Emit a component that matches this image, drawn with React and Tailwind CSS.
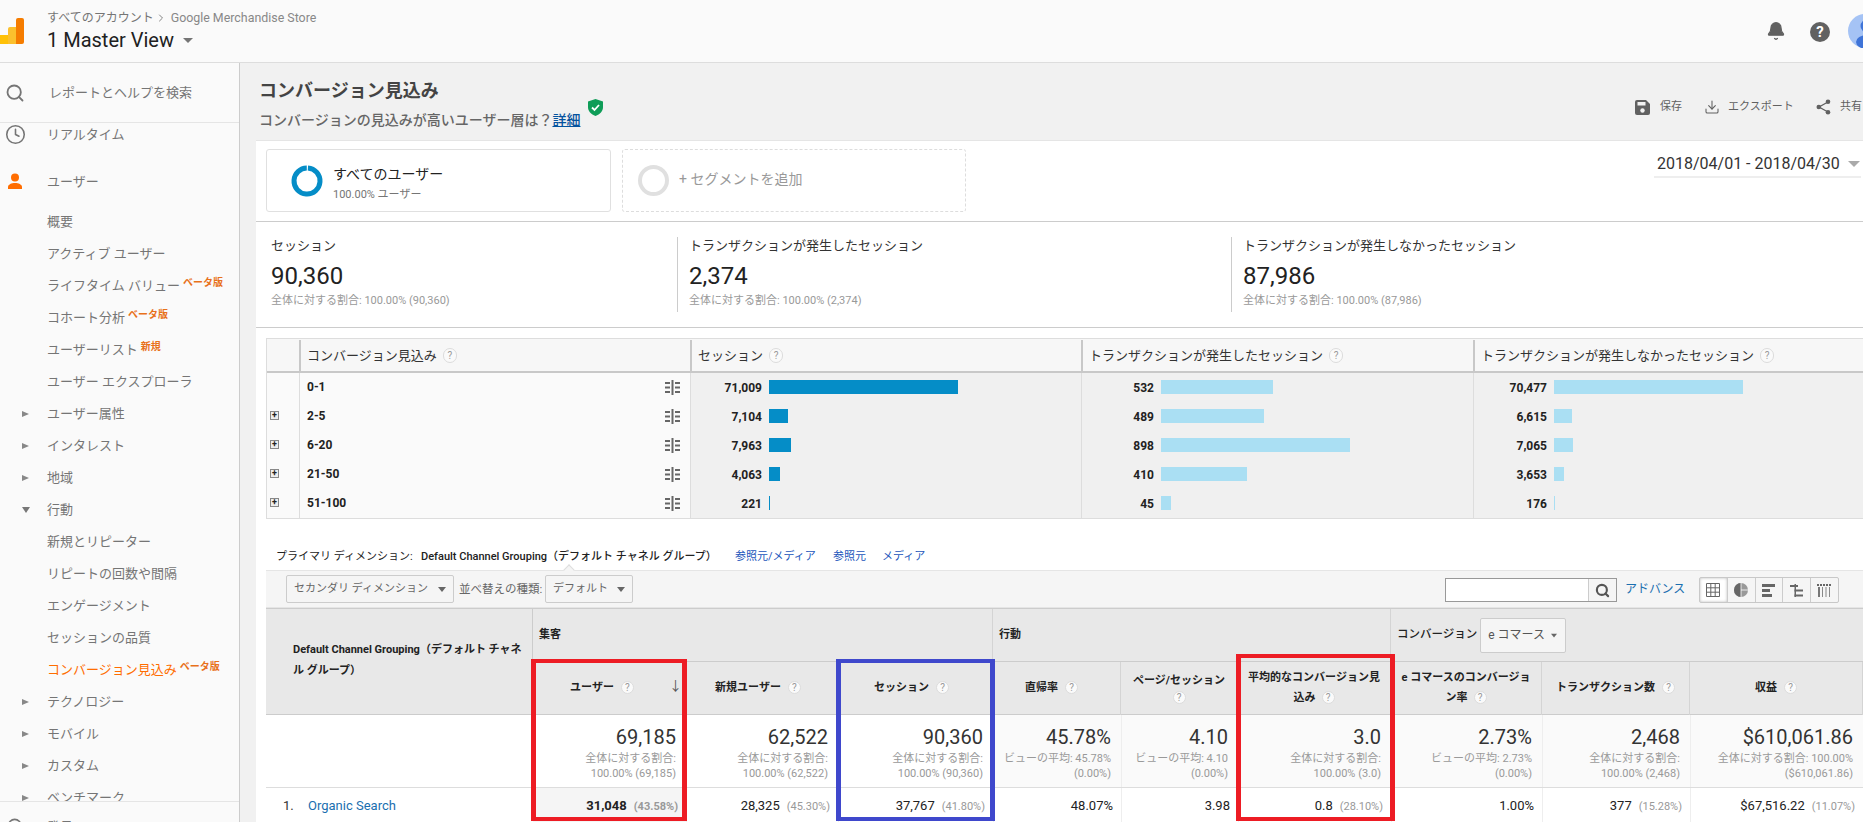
import { Bell, ChevronRight, Clock, Download, Search } from "lucide-react";

const sideItems = [
  { label: "概要", y: 221 },
  { label: "アクティブ ユーザー", y: 253 },
  { label: "ライフタイム バリュー", y: 285, tag: "ベータ版" },
  { label: "コホート分析", y: 317, tag: "ベータ版" },
  { label: "ユーザーリスト", y: 349, tag: "新規" },
  { label: "ユーザー エクスプローラ", y: 381 },
  { label: "ユーザー属性", y: 413, arrow: "right" },
  { label: "インタレスト", y: 445, arrow: "right" },
  { label: "地域", y: 477, arrow: "right" },
  { label: "行動", y: 509, arrow: "down" },
  { label: "新規とリピーター", y: 541 },
  { label: "リピートの回数や間隔", y: 573 },
  { label: "エンゲージメント", y: 605 },
  { label: "セッションの品質", y: 637 },
  { label: "コンバージョン見込み", y: 669, tag: "ベータ版", active: true },
  { label: "テクノロジー", y: 701, arrow: "right" },
  { label: "モバイル", y: 733, arrow: "right" },
  { label: "カスタム", y: 765, arrow: "right" },
  { label: "ベンチマーク", y: 797, arrow: "right" },
];

const probRows = [
  { label: "0-1", a: "71,009", aw: 189, b: "532", bw: 112, c: "70,477", cw: 189 },
  { label: "2-5", a: "7,104", aw: 19, b: "489", bw: 103, c: "6,615", cw: 18, plus: true },
  { label: "6-20", a: "7,963", aw: 22, b: "898", bw: 189, c: "7,065", cw: 19, plus: true },
  { label: "21-50", a: "4,063", aw: 11, b: "410", bw: 86, c: "3,653", cw: 10, plus: true },
  { label: "51-100", a: "221", aw: 1, b: "45", bw: 10, c: "176", cw: 1, plus: true },
];

const columns = [
  { head: ["ユーザー"], headClass: "pr-[14px]", total: "69,185", sub: ["全体に対する割合:", "100.00% (69,185)"], val: "31,048", pct: "(43.58%)", sorted: true },
  { head: ["新規ユーザー"], headClass: "pr-[7px]", total: "62,522", sub: ["全体に対する割合:", "100.00% (62,522)"], val: "28,325", pct: "(45.30%)" },
  { head: ["セッション"], headClass: "pr-[7px]", total: "90,360", sub: ["全体に対する割合:", "100.00% (90,360)"], val: "37,767", pct: "(41.80%)" },
  { head: ["直帰率"], headClass: "pr-[10px]", total: "45.78%", sub: ["ビューの平均: 45.78%", "(0.00%)"], val: "48.07%" },
  { head: ["ページ/セッション", ""], total: "4.10", sub: ["ビューの平均: 4.10", "(0.00%)"], val: "3.98" },
  { head: ["平均的なコンバージョン見", "込み"], total: "3.0", sub: ["全体に対する割合:", "100.00% (3.0)"], val: "0.8", pct: "(28.10%)" },
  { head: ["e コマースのコンバージョ", "ン率"], total: "2.73%", sub: ["ビューの平均: 2.73%", "(0.00%)"], val: "1.00%" },
  { head: ["トランザクション数"], total: "2,468", sub: ["全体に対する割合:", "100.00% (2,468)"], val: "377", pct: "(15.28%)" },
  { head: ["収益"], total: "$610,061.86", sub: ["全体に対する割合: 100.00%", "($610,061.86)"], val: "$67,516.22", pct: "(11.07%)" },
];

function Help({ big }) {
  return (
    <span className={`inline-flex shrink-0 items-center justify-center rounded-full border border-[#dcdcdc] bg-[#fafafa] font-normal leading-none text-[#999] ${big ? "h-[15px] w-[14px] text-[10px]" : "h-[13px] w-[13px] text-[10px]"}`}>
      ?
    </span>
  );
}

function Caret({ className = "" }) {
  return <span className={`inline-block h-0 w-0 border-x-[4px] border-t-[5px] border-x-transparent border-t-[#666] ${className}`} />;
}

function Logo() {
  return (
    <svg width="25" height="26" viewBox="0 0 25 26" className="absolute left-0 top-[18px]">
      <rect x="-6" y="17" width="22" height="9" rx="2" fill="#ffc107" />
      <path d="M8 11a2 2 0 0 1 2-2h6v17H8z" fill="#fbc02d" />
      <path d="M16 2a2 2 0 0 1 2-2h4a2 2 0 0 1 2 2v22a2 2 0 0 1-2 2h-6z" fill="#f57c00" />
    </svg>
  );
}

function SideNav() {
  return (
    <aside className="absolute bottom-0 left-0 top-[63px] w-[240px] overflow-hidden border-r border-[#ccc] bg-[#fafafa] text-[13px] text-[#757575]">
      <div className="absolute left-0 top-0 h-[60px] w-full border-b border-[#e5e5e5]">
        <Search size={20} strokeWidth={2.2} className="absolute left-[5px] top-[20px] text-[#757575]" />
        <span className="absolute left-[49px] top-[20px] leading-5">レポートとヘルプを検索</span>
      </div>
      <Clock size={21} strokeWidth={1.8} className="absolute left-[5px] top-[61px] text-[#757575]" />
      <span className="absolute left-[47px] top-[62px] leading-5">リアルタイム</span>
      <svg width="18" height="18" viewBox="0 0 18 18" className="absolute left-[7px] top-[110px]">
        <circle cx="8" cy="4.500" r="4" fill="#ff6d00" />
        <path d="M1 16v-2c0-2.500 3.500-4 7-4s7 1.500 7 4v2z" fill="#ff6d00" />
      </svg>
      <span className="absolute left-[47px] top-[109px] leading-5">ユーザー</span>
      {sideItems.map((item) => (
        <div key={item.label} className="absolute left-0 flex h-5 items-center" style={{ top: item.y - 72 }}>
          {item.arrow === "right" && (
            <span className="absolute left-[22px] h-0 w-0 border-y-[3.5px] border-l-[7px] border-y-transparent border-l-[#888]" />
          )}
          {item.arrow === "down" && (
            <span className="absolute left-[22px] h-0 w-0 border-x-[4px] border-t-[6px] border-x-transparent border-t-[#777]" />
          )}
          <span className={`ml-[47px] whitespace-nowrap ${item.active ? "text-[#ff6d00]" : ""}`}>{item.label}</span>
          {item.tag && (
            <span className="relative top-[-4px] ml-[3px] whitespace-nowrap text-[10px] font-bold text-[#e8711a]">{item.tag}</span>
          )}
        </div>
      ))}
      <div className="absolute left-0 top-[738px] h-[30px] w-full border-t border-[#e5e5e5] bg-[#fafafa]">
        <Search size={19} className="absolute left-[6px] top-[15px] text-[#757575]" />
        <span className="absolute left-[47px] top-[15px] leading-5">発見</span>
      </div>
    </aside>
  );
}

function SegmentRow() {
  return (
    <div className="relative h-[81px] border-b border-[#ccc]">
      <div className="absolute left-[10px] top-[8px] h-[63px] w-[345px] rounded-[3px] border border-[#e0e0e0]">
        <svg width="32" height="32" viewBox="0 0 32 32" className="absolute left-[24px] top-[15px]">
          <circle cx="16" cy="16" r="13" fill="none" stroke="#058dc7" strokeWidth="5" strokeDasharray="80 1.700" transform="rotate(-86 16 16)" />
        </svg>
        <div className="absolute left-[66px] top-[14px] whitespace-nowrap text-[14px] leading-5 text-[#222]">すべてのユーザー</div>
        <div className="absolute left-[66px] top-[37px] whitespace-nowrap text-[11px] leading-4 text-[#757575]">100.00% ユーザー</div>
      </div>
      <div className="absolute left-[366px] top-[8px] h-[63px] w-[344px] rounded-[3px] border border-dashed border-[#ddd]">
        <span className="absolute left-[15px] top-[15px] h-[31px] w-[31px] rounded-full border-[4px] border-[#e0e0e0]" />
        <span className="absolute left-[56px] top-[19px] whitespace-nowrap text-[14px] leading-5 text-[#999]">+ セグメントを追加</span>
      </div>
      <div className="absolute left-[1398px] top-[11px] flex h-[26px] w-[207px] items-center border-b-2 border-[#eee] pl-[3px] text-[16px] text-[#333]">
        <span className="whitespace-nowrap">2018/04/01 - 2018/04/30</span>
        <span className="ml-[8px] h-0 w-0 border-x-[6px] border-t-[6px] border-x-transparent border-t-[#aaa]" />
      </div>
    </div>
  );
}

function Scorecard({ className, title, value, foot, divider }) {
  return (
    <div className={`absolute top-[15px] h-[75px] ${divider ? "border-l border-[#ccc] pl-[11px]" : ""} ${className}`}>
      <div className="whitespace-nowrap text-[13px] leading-[18px] text-[#333]">{title}</div>
      <div className="mt-[7px] text-[24px] leading-[28px] text-[#222]">{value}</div>
      <div className="mt-[4px] whitespace-nowrap text-[11px] leading-[14px] text-[#999]">{foot}</div>
    </div>
  );
}

function ScoreRow() {
  return (
    <div className="relative h-[106px] border-b border-[#ccc]">
      <Scorecard className="left-[15px]" title="セッション" value="90,360" foot="全体に対する割合: 100.00% (90,360)" />
      <Scorecard className="left-[421px]" divider title="トランザクションが発生したセッション" value="2,374" foot="全体に対する割合: 100.00% (2,374)" />
      <Scorecard className="left-[975px]" divider title="トランザクションが発生しなかったセッション" value="87,986" foot="全体に対する割合: 100.00% (87,986)" />
    </div>
  );
}

function SliceIcon() {
  return (
    <svg width="15" height="15" viewBox="0 0 15 15" className="absolute right-[10px] top-[7px]" fill="#666">
      <rect x="6.500" y="0" width="2" height="15" />
      <rect x="0" y="2" width="5" height="2" />
      <rect x="0" y="6.500" width="5" height="2" />
      <rect x="0" y="11" width="5" height="2" />
      <rect x="10" y="2" width="5" height="2" />
      <rect x="10" y="6.500" width="5" height="2" />
      <rect x="10" y="11" width="5" height="2" />
    </svg>
  );
}

function BarCell({ value, width, valueW, color }) {
  return (
    <div className="relative h-full border-l border-[#ddd] bg-[#f0f0f0]">
      <span className="absolute top-[8px] text-right text-[12px] font-bold leading-[14px] text-[#222]" style={{ width: valueW }}>{value}</span>
      <span className={`absolute top-[7px] h-[14px] ${color}`} style={{ left: valueW + 7, width }} />
    </div>
  );
}

function ProbTable() {
  return (
    <div className="absolute left-[10px] right-0 top-[197px] border-y border-l border-[#ddd]">
      <div className="grid h-[34px] grid-cols-[32px_391px_391px_392px_1fr] border-b-2 border-[#c8c8c8] bg-[#f7f7f7] pt-[1px] text-[13px] text-[#333]">
        <div />
        {["コンバージョン見込み", "セッション", "トランザクションが発生したセッション", "トランザクションが発生しなかったセッション"].map((h, i) => (
          <div key={h} className={`flex items-center gap-[6px] border-l-2 border-[#c8c8c8] ${i === 1 ? "pl-[6px]" : "pl-[6px]"}`}>
            <span className="whitespace-nowrap">{h}</span>
            <Help big />
          </div>
        ))}
      </div>
      {probRows.map((r) => (
        <div key={r.label} className="grid h-[29px] grid-cols-[32px_391px_391px_392px_1fr] border-b border-[#ddd]">
          <div className="relative bg-[#fafafa]">
            {r.plus && (
              <span className="absolute left-[3px] top-[9px] flex h-[9px] w-[9px] items-center justify-center border border-[#888] bg-[#eee] text-[9px] font-bold leading-none text-[#222]">+</span>
            )}
          </div>
          <div className="relative border-l border-[#ddd] bg-[#fafafa] pl-[7px] text-[12px] font-bold leading-[29px] text-[#222]">
            {r.label}
            <SliceIcon />
          </div>
          <BarCell value={r.a} width={r.aw} valueW={71} color="bg-[#058dc7]" />
          <BarCell value={r.b} width={r.bw} valueW={72} color="bg-[#aadff3]" />
          <BarCell value={r.c} width={r.cw} valueW={73} color="bg-[#aadff3]" />
          <div className="bg-[#f0f0f0]" />
        </div>
      ))}
    </div>
  );
}

function PrimaryDim() {
  return (
    <div className="absolute left-[20px] top-[408px] flex items-center whitespace-nowrap text-[11px] leading-4 text-[#222]">
      <span className="w-[145px]">プライマリ ディメンション:</span>
      <span className="w-[314px] font-medium">Default Channel Grouping（デフォルト チャネル グループ）</span>
      <span className="w-[98px] text-[#2255bb]">参照元/メディア</span>
      <span className="w-[49px] text-[#2255bb]">参照元</span>
      <span className="text-[#2255bb]">メディア</span>
    </div>
  );
}

function ViewIcons() {
  return (
    <div className="absolute left-[1433px] top-[6px] flex h-[26px] w-[140px] rounded-[2px] border border-[#c8c8c8]">
      <div className="flex flex-1 items-center justify-center bg-white shadow-[inset_0_0_3px_#bbb]">
        <svg width="14" height="14" viewBox="0 0 14 14" fill="none" stroke="#666">
          <path d="M.5.5h13v13H.5zM.5 4.800h13M.5 9.200h13M4.800 .5v13M9.200 .5v13" />
        </svg>
      </div>
      <div className="flex flex-1 items-center justify-center border-l border-[#ccc]">
        <svg width="14" height="14" viewBox="0 0 14 14">
          <circle cx="7" cy="7" r="7" fill="#999" />
          <path d="M7 0a7 7 0 0 0 0 14z" fill="#666" />
          <path d="M7 7h7M7 0v14" stroke="#fff" strokeWidth=".8" />
        </svg>
      </div>
      <div className="flex flex-1 items-center justify-center border-l border-[#ccc]">
        <svg width="13" height="13" viewBox="0 0 13 13" fill="#666">
          <rect width="13" height="3" />
          <rect y="5" width="8" height="3" />
          <rect y="10" width="10" height="3" />
        </svg>
      </div>
      <div className="flex flex-1 items-center justify-center border-l border-[#ccc]">
        <svg width="13" height="13" viewBox="0 0 13 13" fill="#666">
          <rect x="4.500" width="1.500" height="13" />
          <rect y="1" width="8" height="2" />
          <rect x="4.500" y="5.500" width="8.500" height="2" />
          <rect x="4.500" y="10.500" width="8.500" height="2" />
        </svg>
      </div>
      <div className="flex flex-1 items-center justify-center border-l border-[#ccc]">
        <svg width="15" height="13" viewBox="0 0 15 13" fill="#888">
          <path d="M0 0h2v2H0zM3 0h2v2H3zM6 0h2v2H6zM9 0h2v2H9zM12 0h2v2h-2z" fill="#666" />
          <rect x="1" y="3" width="2" height="10" fill="#777" />
          <rect x="5" y="3" width="1" height="10" />
          <rect x="8.500" y="3" width="1" height="10" />
          <rect x="12" y="3" width="1" height="10" />
        </svg>
      </div>
    </div>
  );
}

function Toolbar() {
  return (
    <div className="absolute left-[10px] right-0 top-[429px] h-[38px] border-y border-[#e5e5e5] bg-[#f5f5f5] text-[#666]">
      <span className="absolute left-[299px] top-[-5px] h-[8px] w-[8px] rotate-45 border-l border-t border-[#ddd] bg-[#f5f5f5]" />
      <div className="absolute left-[20px] top-[4px] flex h-[28px] w-[168px] items-center justify-between rounded-[2px] border border-[#ccc] px-[7px] text-[11px]">
        <span className="whitespace-nowrap">セカンダリ ディメンション</span>
        <Caret />
      </div>
      <span className="absolute left-[193px] top-[10px] whitespace-nowrap text-[11.500px] leading-4">並べ替えの種類:</span>
      <div className="absolute left-[279px] top-[4px] flex h-[28px] w-[88px] items-center justify-between rounded-[2px] border border-[#ccc] px-[7px] text-[11px]">
        <span className="whitespace-nowrap">デフォルト</span>
        <Caret />
      </div>
      <div className="absolute left-[1179px] top-[7px] flex h-[24px] w-[172px] border border-[#999] bg-white">
        <div className="flex-1" />
        <div className="flex w-[28px] items-center justify-center border-l border-[#ccc] bg-[#f5f5f5]">
          <Search size={15} strokeWidth={3.4} className="text-[#555]" />
        </div>
      </div>
      <span className="absolute left-[1359px] top-[10px] whitespace-nowrap text-[12px] leading-4 text-[#1a6fb0]">アドバンス</span>
      <ViewIcons />
    </div>
  );
}

function DataTable() {
  const grid = "grid grid-cols-[153px_152px_155px_128px_117px_153px_151px_148px_1fr]";
  return (
    <div className="absolute left-[10px] right-0 top-[467px] text-[#222]">
      {/* header */}
      <div className="relative h-[107px] border-y border-[#ccc] bg-[#e8e8e8]">
        <div className="absolute left-0 top-0 h-full w-[267px] border-r border-[#ccc] pl-[27px] pr-[8px] pt-[30px] text-[11px] font-bold leading-[21px]">
          Default Channel Grouping（デフォルト チャネル グループ）
        </div>
        <div className="absolute left-[267px] right-0 top-0 flex h-[52px] items-center text-[11px] font-bold">
          <div className="flex h-full w-[460px] items-center border-r border-[#d4d4d4] pl-[6px]">集客</div>
          <div className="flex h-full w-[398px] items-center border-r border-[#d4d4d4] pl-[6px]">行動</div>
          <div className="flex h-full flex-1 items-center pl-[6px]">
            <span className="whitespace-nowrap text-[11.500px] font-medium">コンバージョン</span>
            <div className="ml-[3px] flex h-[35px] w-[86px] items-center justify-between rounded-[2px] border border-[#ccc] bg-[#f5f5f5] px-[7px] text-[12px] font-normal text-[#555]">
              <span className="whitespace-nowrap">e コマース</span>
              <Caret className="scale-75" />
            </div>
          </div>
        </div>
        <div className={`absolute left-[267px] right-0 top-[52px] h-[54px] border-t border-[#ccc] ${grid}`}>
          {columns.map((c) => (
            <div key={c.head[0]} className={`relative flex flex-col items-center justify-center border-r border-[#d4d4d4] pb-[2px] text-[11px] font-bold leading-[20px] ${c.headClass || ""}`}>
              {c.head.length === 1 ? (
                <div className="flex items-center gap-[7px] whitespace-nowrap">
                  {c.head[0]}
                  <Help />
                </div>
              ) : (
                <>
                  <div className="whitespace-nowrap">{c.head[0]}</div>
                  <div className="flex items-center gap-[6px] whitespace-nowrap">
                    {c.head[1]}
                    <Help />
                  </div>
                </>
              )}
              {c.sorted && <span className="absolute right-[3px] top-[17px] text-[13px] font-normal leading-none text-[#555]">↓</span>}
            </div>
          ))}
        </div>
      </div>
      {/* totals */}
      <div className="flex h-[73px] border-b border-[#ddd] bg-white">
        <div className="w-[267px] shrink-0" />
        <div className={`flex-1 ${grid}`}>
          {columns.map((c, i) => (
            <div key={c.head[0]} className={`pr-[10px] pt-[9px] text-right ${i > 2 ? "bg-[#fafafa]" : ""} ${i > 0 ? "border-l border-[#eee]" : ""}`}>
              <div className="mb-[1px] whitespace-nowrap text-[20px] leading-[26px] text-[#333]">{c.total}</div>
              <div className="whitespace-nowrap text-[11px] leading-[15px] text-[#999]">{c.sub[0]}</div>
              <div className="whitespace-nowrap text-[11px] leading-[15px] text-[#999]">{c.sub[1]}</div>
            </div>
          ))}
        </div>
      </div>
      {/* first row */}
      <div className="flex h-[40px] bg-white text-[13px]">
        <div className="flex w-[267px] shrink-0 pl-[17px] pt-[8px] leading-5">
          <span className="w-[25px] text-[#333]">1.</span>
          <span className="text-[#1a6fb0]">Organic Search</span>
        </div>
        <div className={`flex-1 ${grid}`}>
          {columns.map((c, i) => (
            <div key={c.head[0]} className={`whitespace-nowrap pr-[8px] pt-[8px] text-right leading-5 ${c.sorted ? "bg-[#f5f5f5] font-bold" : ""} ${i > 0 ? "border-l border-[#eee]" : ""}`}>
              {c.val}
              {c.pct && <span className={`ml-[7px] text-[11px] text-[#999] ${c.sorted ? "font-bold" : ""}`}>{c.pct}</span>}
            </div>
          ))}
        </div>
      </div>
    </div>
  );
}

function Marks() {
  return (
    <>
      <div className="absolute left-[531px] top-[659px] h-[162px] w-[156px] border-x-[5px] border-y-[4px] border-[#ed1c24]" />
      <div className="absolute left-[836px] top-[659px] h-[162px] w-[159px] border-x-[5px] border-y-[4px] border-[#3f48cc]" />
      <div className="absolute left-[1236px] top-[654px] h-[167px] w-[159px] border-x-[5px] border-y-[4px] border-[#ed1c24]" />
    </>
  );
}

export default function App() {
  return (
    <div
      className="relative h-[822px] w-[1863px] overflow-hidden bg-[#f1f1f1] text-[13px]"
      style={{ fontFamily: 'Roboto, "Noto Sans CJK JP", sans-serif' }}
    >
      <header className="absolute left-0 top-0 h-[63px] w-full border-b border-[#ddd] bg-[#fafafa]">
        <Logo />
        <div className="absolute left-[47px] top-[10px] flex items-center whitespace-nowrap text-[12px] leading-4 text-[#757575]">
          すべてのアカウント
          <ChevronRight size={12} strokeWidth={1.800} className="ml-[1px]" />
          <span className="ml-[4px] text-[12.400px] text-[#888]">Google Merchandise Store</span>
        </div>
        <div className="absolute left-[47px] top-[27px] flex items-center text-[20px] leading-[26px] text-[#212121]">
          1 Master View
          <span className="ml-[9px] h-0 w-0 border-x-[5px] border-t-[5px] border-x-transparent border-t-[#757575]" />
        </div>
        <Bell size={20} fill="#616161" strokeWidth={1.5} className="absolute left-[1766px] top-[21px] text-[#616161]" />
        <span className="absolute left-[1810px] top-[22px] flex h-[20px] w-[20px] items-center justify-center rounded-full bg-[#616161] text-[15px] font-bold leading-none text-white">?</span>
        <svg width="40" height="34" viewBox="0 0 40 34" className="absolute left-[1848px] top-[14px]">
          <circle cx="17" cy="17" r="17" fill="#a5c3f5" />
          <circle cx="19" cy="12" r="6.500" fill="#3f74d8" />
          <ellipse cx="19" cy="28" rx="11" ry="7" fill="#3f74d8" />
        </svg>
      </header>

      <SideNav />

      <main className="absolute bottom-0 left-[240px] right-0 top-[63px]">
        <h1 className="absolute left-[19px] top-[16px] whitespace-nowrap text-[18px] font-bold leading-6 text-[#444]">コンバージョン見込み</h1>
        <p className="absolute left-[19px] top-[47px] whitespace-nowrap text-[14px] font-medium leading-5 text-[#666]">
          コンバージョンの見込みが高いユーザー層は？<span className="text-[#05539e] underline">詳細</span>
        </p>
        <svg width="15" height="17" viewBox="0 0 15 17" className="absolute left-[348px] top-[36px]">
          <path d="M7.500 0 15 2.500v5.500c0 4-3 7.500-7.500 9C3 15.500 0 12 0 8V2.500z" fill="#0f9d58" />
          <path d="M4 8.500l2.500 2.500L11 6" fill="none" stroke="#fff" strokeWidth="1.800" />
        </svg>
        <div className="absolute right-0 top-[44px] flex h-0 w-[228px] items-center text-[11px] text-[#616161]">
          <svg width="15" height="15" viewBox="0 0 15 15" className="absolute left-0 top-[-7px]">
            <path d="M2 0h9l4 4v9a2 2 0 0 1-2 2H2a2 2 0 0 1-2-2V2a2 2 0 0 1 2-2z" fill="#616161" />
            <rect x="2.500" y="2" width="8" height="3.500" fill="#f1f1f1" />
            <circle cx="7.500" cy="10.500" r="2.200" fill="#f1f1f1" />
          </svg>
          <span className="absolute left-[25px] whitespace-nowrap">保存</span>
          <Download size={16} strokeWidth={1.6} className="absolute left-[69px] top-[-8px]" />
          <span className="absolute left-[93px] whitespace-nowrap">エクスポート</span>
          <svg width="15" height="16" viewBox="0 0 15 16" className="absolute left-[181px] top-[-8px]">
            <path d="M12 3 3 8l9 5" fill="none" stroke="#616161" strokeWidth="1.300" />
            <circle cx="12" cy="2.700" r="2.300" fill="#616161" />
            <circle cx="2.800" cy="8" r="2.300" fill="#616161" />
            <circle cx="12" cy="13.300" r="2.300" fill="#616161" />
          </svg>
          <span className="absolute left-[205px] whitespace-nowrap">共有</span>
        </div>

        <section className="absolute bottom-0 left-[16px] right-0 top-[77px] border-t border-[#e5e5e5] bg-white">
          <SegmentRow />
          <ScoreRow />
          <ProbTable />
          <PrimaryDim />
          <Toolbar />
          <DataTable />
        </section>
      </main>

      <Marks />
    </div>
  );
}
